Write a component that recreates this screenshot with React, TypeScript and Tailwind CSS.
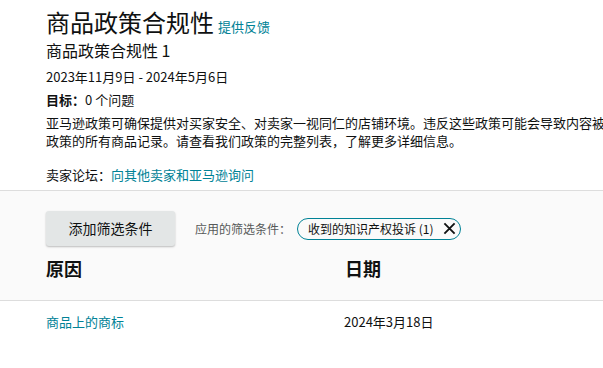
import React from "react";

const FONT = "font-['Noto_Sans_CJK_SC','Noto_Sans',sans-serif]";

const ComplianceHeader: React.FC = () => {
    return (
        <div className="pl-[46px] pt-[8px] text-[#0f1111]">
            <div className="flex items-baseline gap-[4px] whitespace-nowrap">
                <h1 className="text-[24px] leading-[28px] font-normal">商品政策合规性</h1>
                <a className="text-[13px] leading-[18px] text-[#008296]" href="#">提供反馈</a>
            </div>
            <div className="mt-[3px] text-[16px] leading-[22px]">商品政策合规性 1</div>
            <div className="mt-[7px] text-[13px] leading-[18px]">2023年11月9日 - 2024年5月6日</div>
            <div className="mt-[5px] text-[13px] leading-[18px]">
                <span className="font-bold">目标：</span>0 个问题
            </div>
            <p className="mt-[5px] text-[13px] leading-[18px] whitespace-nowrap">
                亚马逊政策可确保提供对买家安全、对卖家一视同仁的店铺环境。违反这些政策可能会导致内容被删除。我们会在此处显示违反这些
                <br />
                政策的所有商品记录。请查看我们政策的完整列表，了解更多详细信息。
            </p>
            <div className="mt-[16px] text-[13px] leading-[18px] whitespace-nowrap">
                卖家论坛：<a className="text-[#008296]" href="#">向其他卖家和亚马逊询问</a>
            </div>
        </div>
    );
};

const FilterBar: React.FC = () => {
    return (
        <div className="mt-[6px] bg-[#fafafa] border-y border-[#dddddd] pl-[46px] pt-[20px] pb-[20px]">
            <div className="flex items-center whitespace-nowrap">
                <button className="w-[129px] h-[35px] rounded-[3px] bg-[#e3e6e6] text-[14px] text-[#0f1111] shadow-[0_1px_2px_rgba(0,0,0,0.25)]">
                    添加筛选条件
                </button>
                <span className="ml-[20px] text-[12px] leading-[18px] text-[#565959]">应用的筛选条件：</span>
                <span className="ml-[6px] flex items-center h-[22px] pl-[10px] pr-[4px] border border-[#008296] rounded-full text-[12px] leading-[18px] text-[#0f1111]">
                    收到的知识产权投诉 (1)
                    <svg className="ml-[10px]" width="13" height="13" viewBox="0 0 14 14" fill="none" stroke="#0f1111" strokeWidth="2">
                        <path d="M1.5 1.5 L12.5 12.5 M12.5 1.5 L1.5 12.5" />
                    </svg>
                </span>
            </div>
            <div className="mt-[10px] grid grid-cols-[299px_1fr] text-[18px] leading-[24px] font-bold text-[#0f1111]">
                <div>原因</div>
                <div>日期</div>
            </div>
        </div>
    );
};

const App: React.FC = () => {
    return (
        <div className={`w-[603px] h-[368px] overflow-hidden bg-white ${FONT}`}>
            <ComplianceHeader />
            <FilterBar />
            <div className="pl-[46px] pt-[12px] grid grid-cols-[298px_1fr] text-[13px] leading-[18px]">
                <a className="text-[#008296]" href="#">商品上的商标</a>
                <div className="text-[#0f1111]">2024年3月18日</div>
            </div>
        </div>
    );
};

export default App;
